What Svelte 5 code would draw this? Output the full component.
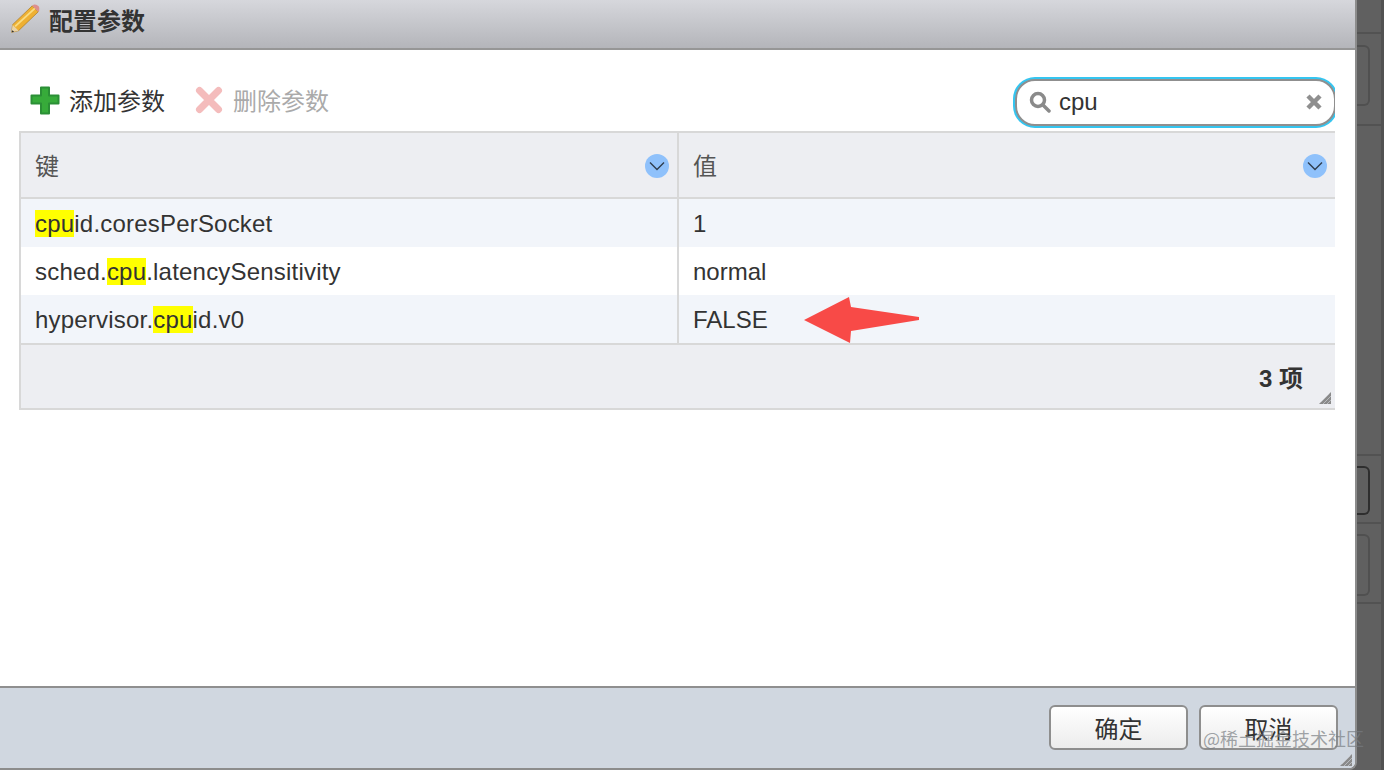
<script lang="ts">
	const rows = [
		{ before: '', hit: 'cpu', after: 'id.coresPerSocket', value: '1' },
		{ before: 'sched.', hit: 'cpu', after: '.latencySensitivity', value: 'normal' },
		{ before: 'hypervisor.', hit: 'cpu', after: 'id.v0', value: 'FALSE' }
	];
	const columns = ['键', '值'];
	let query = $state('cpu');
</script>

{#snippet grip()}
	<svg class="grip" width="14" height="14" viewBox="0 0 14 14">
		<path d="M13 1V13H1Z" fill="#8a8a8a" />
		<path d="M5 13L13 5M9 13L13 9M3 11L11 3" stroke="#c4c7cc" stroke-width="0.8" />
	</svg>
{/snippet}

<div class="page">
	<div class="dialog">
		<header class="title-bar">
			<svg width="30" height="33" viewBox="0 0 35 38">
				<path d="M3 25L26 3L33 10L10 32L2 34Z" fill="#eeb033" stroke="#a87a22" stroke-width="0.8" />
				<path d="M6 27L29 6" stroke="#f9dc83" stroke-width="2.200" />
				<path d="M26 3L28 1.500Q31 1 33.500 3.500Q35 6 34 8.500L33 10Z" fill="#dd8f8f" />
				<path d="M3 25L10 32L2 34Z" fill="#e9d3a8" />
				<path d="M2.600 31.500L2 34L5 33.200Z" fill="#333" />
			</svg>
			<h1>配置参数</h1>
		</header>

		<main class="content">
			<div class="toolbar">
				<button class="tool">
					<svg width="30" height="30" viewBox="0 0 30 30">
						<path
							d="M11 2.500H19V10.500H28.500V18.500H19V28.500H11V18.500H1.500V10.500H11Z"
							fill="#37ab3a"
							stroke="#2b8f36"
							stroke-width="2"
							stroke-linejoin="round"
						/>
					</svg>
					添加参数
				</button>
				<button class="tool disabled">
					<svg width="28" height="28" viewBox="0 0 28 28">
						<path d="M4.500 4.500L23.500 23.500M23.500 4.500L4.500 23.500" stroke="#f4bcbc" stroke-width="7" stroke-linecap="round" />
					</svg>
					删除参数
				</button>
				<label class="search">
					<svg width="22" height="22" viewBox="0 0 22 22">
						<circle cx="9" cy="9" r="6.500" fill="none" stroke="#8a8a8a" stroke-width="3.500" />
						<path d="M14 14L20 20" stroke="#8a8a8a" stroke-width="3.500" stroke-linecap="round" />
					</svg>
					<input bind:value={query} aria-label="搜索" />
					<svg width="16" height="16" viewBox="0 0 16 16">
						<path d="M2 2L14 14M14 2L2 14" stroke="#8f8f8f" stroke-width="4.500" />
					</svg>
				</label>
			</div>

			<div class="table">
				<div class="row head">
					{#each columns as col}
						<div class="cell">
							<span class="label">{col}</span>
							<span class="sort">
								<svg width="16" height="10" viewBox="0 0 16 10">
									<path d="M1 1.500L8 8.500L15 1.500" fill="none" stroke="#2f3d4d" stroke-width="1.400" />
								</svg>
							</span>
						</div>
					{/each}
				</div>
				<div class="rows">
					{#each rows as row}
						<div class="row item">
							<div class="cell key">
								<span>{row.before}<mark>{row.hit}</mark>{row.after}</span>
							</div>
							<div class="cell">{row.value}</div>
						</div>
					{/each}
				</div>
				<div class="table-foot">
					<strong>3 项</strong>
					{@render grip()}
				</div>
			</div>

			<svg class="arrow" width="118" height="48" viewBox="0 0 118 48">
				<path d="M1 24L46 1L48 11L116 21V24L48 35L47 47Z" fill="#f84a47" />
			</svg>
		</main>

		<footer class="actions">
			<button class="btn">确定</button>
			<button class="btn">取消</button>
			{@render grip()}
		</footer>
	</div>

	<aside class="behind">
		<div class="slot first"></div>
		<div class="slot second"><i></i></div>
		<div class="slot tall"></div>
		<div class="slot active"><i class="dark"></i></div>
		<div class="slot last"><i></i></div>
	</aside>

	<div class="watermark">@稀土掘金技术社区</div>
</div>

<style>
	:global(body) {
		margin: 0;
		background: #606060;
	}

	.page {
		position: relative;
		display: flex;
		width: 1384px;
		height: 770px;
		overflow: hidden;
		font-family: 'Liberation Sans', 'Noto Sans CJK SC', sans-serif;
		font-size: 24px;
		color: #333;
	}

	.dialog {
		display: flex;
		flex-direction: column;
		width: 1355px;
		height: 768px;
		flex-shrink: 0;
		background: #fff;
		border-right: 2px solid #8c8c8c;
		border-bottom: 2px solid #8c8c8c;
		border-bottom-right-radius: 8px;
		overflow: hidden;
	}

	.title-bar {
		display: flex;
		align-items: center;
		gap: 9px;
		height: 48px;
		padding-left: 10px;
		flex-shrink: 0;
		background: linear-gradient(#d6d7dc, #b4b5ba);
		border-bottom: 2px solid #969696;
	}

	.title-bar svg {
		margin-top: -9px;
	}

	h1 {
		margin: 0 0 10px;
		font-size: 24px;
		font-weight: 700;
		color: #333;
	}

	.content {
		position: relative;
		flex: 1;
	}

	.toolbar {
		display: flex;
		align-items: center;
		height: 81px;
		box-sizing: border-box;
		margin-right: 20px;
		padding: 20px 0 2px 30px;
		overflow: hidden;
	}

	.tool {
		display: flex;
		align-items: center;
		gap: 9px;
		padding: 0;
		border: 0;
		background: none;
		font: inherit;
		color: #333;
		margin-right: 30px;
	}

	.tool.disabled {
		gap: 10px;
		color: #aaa;
	}

	.search {
		display: flex;
		align-items: center;
		gap: 8px;
		box-sizing: border-box;
		width: 321px;
		height: 47px;
		margin: 5px -1px 0 auto;
		padding: 0 12px 0 12px;
		background: #fff;
		border: 2px solid #8f8f8f;
		border-radius: 20px;
		box-shadow: 0 0 0 2px #35c5f0;
		flex-shrink: 0;
	}

	.search input {
		flex: 1;
		min-width: 0;
		padding: 0;
		border: 0;
		outline: 0;
		background: none;
		font: inherit;
		color: #333;
	}

	.table {
		margin: 0 20px 0 19px;
		border-top: 2px solid #d8d8d8;
		border-left: 2px solid #d8d8d8;
		border-bottom: 2px solid #d8d8d8;
	}

	.row {
		display: grid;
		grid-template-columns: 658px 1fr;
	}

	.cell {
		display: flex;
		align-items: center;
		justify-content: space-between;
		box-sizing: border-box;
		padding: 2px 8px 0 14px;
		border-right: 2px solid #d8d8d8;
	}

	.cell:last-child {
		border-right: 0;
	}

	.key {
		letter-spacing: 0.2px;
	}

	.head {
		height: 64px;
		background: #edeef2;
		border-bottom: 2px solid #d8d8d8;
		color: #555;
	}

	.head .cell {
		padding-top: 0;
	}

	.label {
		margin-bottom: 2px;
	}

	.sort {
		display: flex;
		align-items: center;
		justify-content: center;
		width: 24px;
		height: 24px;
		margin-top: 2px;
		border-radius: 50%;
		background: #8fc1fb;
	}

	.item {
		height: 48px;
	}

	.item:nth-child(odd) {
		background: #f2f5fa;
	}

	mark {
		background: #ff0;
		color: inherit;
	}

	.table-foot {
		position: relative;
		display: flex;
		align-items: center;
		justify-content: flex-end;
		height: 63px;
		padding-right: 32px;
		background: #edeef2;
		border-top: 2px solid #d8d8d8;
	}

	.table-foot .grip {
		right: 3px;
		bottom: 3px;
	}

	.grip {
		position: absolute;
	}

	.arrow {
		position: absolute;
		left: 803px;
		top: 246px;
	}

	.actions {
		position: relative;
		display: flex;
		justify-content: flex-end;
		align-items: flex-start;
		gap: 11px;
		height: 82px;
		padding: 17px 17px 0 0;
		box-sizing: border-box;
		flex-shrink: 0;
		background: #d0d7e0;
		border-top: 2px solid #8f8f8f;
	}

	.actions .grip {
		right: 2px;
		bottom: 1px;
	}

	.btn {
		box-sizing: border-box;
		width: 139px;
		height: 45px;
		padding: 0;
		border: 2px solid #8e8e8e;
		border-radius: 6px;
		background: linear-gradient(#fff, #ececec);
		font: inherit;
		color: #333;
	}

	.behind {
		flex: 1;
		display: flex;
		flex-direction: column;
		border-right: 3px solid #525252;
	}

	.slot {
		box-sizing: border-box;
		border-bottom: 2px solid #525252;
	}

	.slot i {
		display: block;
		width: 11px;
		border: 2px solid #505050;
		border-left: 0;
		border-radius: 0 6px 6px 0;
	}

	.slot i.dark {
		height: 45px;
		border-color: #2e2e2e;
	}

	.first {
		height: 34px;
	}

	.second {
		height: 92px;
		padding-top: 11px;
	}

	.second i {
		height: 57px;
	}

	.tall {
		height: 330px;
	}

	.active {
		height: 68px;
		padding-top: 10px;
	}

	.last {
		height: 80px;
		padding-top: 10px;
	}

	.last i {
		height: 58px;
	}

	.watermark {
		position: absolute;
		left: 1203px;
		top: 726px;
		font-family: 'Noto Sans CJK SC', sans-serif;
		font-size: 18px;
		line-height: 24px;
		white-space: nowrap;
		color: rgba(120, 125, 130, 0.7);
	}
</style>
